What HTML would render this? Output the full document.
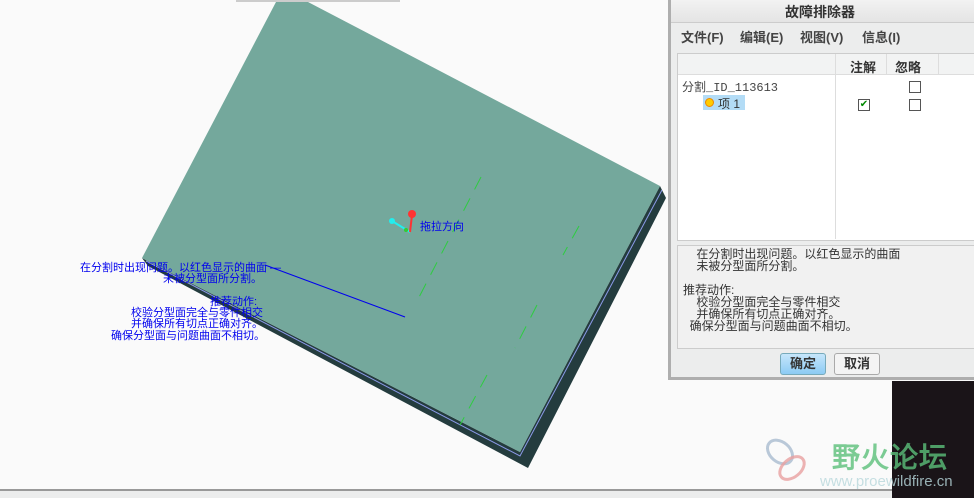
<!DOCTYPE html>
<html><head><meta charset="utf-8"><style>
body{margin:0;width:974px;height:498px;overflow:hidden;background:#fafafa;position:relative;font-family:"Liberation Sans","Noto Sans CJK SC",sans-serif;}
.abs{position:absolute}
.dlg{left:668px;top:0;width:306px;height:380px;background:#eceded;border-left:3px solid #aeaeae;border-bottom:3px solid #aeaeae;box-sizing:border-box}
.t{font-size:13px;color:#333}
.blue{color:#0000ee;font-size:11px;line-height:12px;white-space:nowrap;font-family:"Liberation Sans","WenQuanYi Zen Hei",sans-serif}
.cb{width:10px;height:10px;border:1px solid #555;background:#fff}
.btn{height:20px;border:1px solid #aaa;border-radius:3px;font-size:13px;font-weight:bold;text-align:center;line-height:20px;color:#333}
.m{position:absolute;top:27px;font-size:13px;font-weight:bold;color:#444}
</style></head><body>
<svg class="abs" style="left:0;top:0" width="974" height="498">
<rect x="236" y="0" width="164" height="2" fill="#ccc"/>
<polygon points="142,258 520,452 660,186 666,198 528,468 148,266" fill="#243c3e"/>
<polyline points="146,261 520,456 662,190" fill="none" stroke="#8b9ae8" stroke-width="1"/>
<polygon points="276,2 308,2 660,186 520,452 142,258" fill="#74a89c"/>
<g stroke="#2ecc40" stroke-width="1" stroke-dasharray="14 10">
<line x1="481" y1="177" x2="415" y2="305"/><line x1="579" y1="226" x2="563" y2="255"/>
<line x1="537" y1="305" x2="515" y2="348"/><line x1="487" y1="375" x2="460" y2="425"/>
</g>
<line x1="265" y1="265" x2="405" y2="317" stroke="#0000ee" stroke-width="1"/>
<line x1="410" y1="232" x2="392" y2="221" stroke="#2ee" stroke-width="2"/>
<line x1="410" y1="232" x2="412" y2="215" stroke="#f33" stroke-width="2"/>
<circle cx="392" cy="221" r="3" fill="#2ee"/><circle cx="412" cy="214" r="4" fill="#f33"/>
<circle cx="406" cy="230" r="2" fill="#3c3"/>
<rect x="0" y="489" width="974" height="2" fill="#999"/><rect x="0" y="491" width="974" height="7" fill="#eceded"/>
<rect x="892" y="381" width="82" height="117" fill="#1a1418"/>
</svg>
<div class="abs blue" style="left:420px;top:221px">拖拉方向</div>
<div class="abs blue" style="left:80px;top:262px">在分割时出现问题。以红色显示的曲面 —</div>
<div class="abs blue" style="left:163px;top:273px">未被分型面所分割。</div>
<div class="abs blue" style="left:210px;top:296px">推荐动作:</div>
<div class="abs blue" style="left:131px;top:307px">校验分型面完全与零件相交</div>
<div class="abs blue" style="left:131px;top:318px">并确保所有切点正确对齐。</div>
<div class="abs blue" style="left:111px;top:330px">确保分型面与问题曲面不相切。</div>
<div class="abs dlg">
 <div class="abs" style="left:0;top:0;width:303px;height:22px;background:linear-gradient(#f2f2f2,#e4e4e4);border-bottom:1px solid #ccc"></div>
 <div class="abs" style="left:114px;top:2px;font-size:14px;font-weight:bold;color:#333">故障排除器</div>
 <div class="m" style="left:10px">文件(F)</div>
 <div class="m" style="left:69px">编辑(E)</div>
 <div class="m" style="left:129px">视图(V)</div>
 <div class="m" style="left:191px">信息(I)</div>
 <div class="abs" style="left:6px;top:53px;width:300px;height:186px;background:#fff;border:1px solid #ccc"></div>
 <div class="abs" style="left:7px;top:54px;width:299px;height:20px;background:#f2f3f3;border-bottom:1px solid #ddd"></div>
 <div class="abs" style="left:164px;top:54px;width:1px;height:185px;background:#ddd"></div>
 <div class="abs" style="left:215px;top:54px;width:1px;height:20px;background:#ddd"></div>
 <div class="abs" style="left:267px;top:54px;width:1px;height:20px;background:#ddd"></div>
 <div class="abs t" style="left:179px;top:57px;font-weight:bold">注解</div>
 <div class="abs t" style="left:224px;top:57px;font-weight:bold">忽略</div>
 <div class="abs" style="left:11px;top:78px;font-size:12px;color:#444;font-family:'Liberation Mono','Noto Sans CJK SC',monospace">分割_ID_113613</div>
 <div class="abs" style="left:32px;top:95px;width:42px;height:15px;background:#b3dcf6"></div>
 <div class="abs" style="left:34px;top:98px;width:7px;height:7px;border-radius:50%;background:#fc0;border:1px solid #e80"></div>
 <div class="abs" style="left:47px;top:95px;font-size:12px;color:#333">项 1</div>
 <div class="abs cb" style="left:238px;top:81px"></div>
 <div class="abs cb" style="left:238px;top:99px"></div>
 <div class="abs cb" style="left:187px;top:99px;color:#080;font-size:10px;line-height:10px;text-align:center">✔</div>
 <div class="abs" style="left:6px;top:245px;width:300px;height:102px;border:1px solid #ccc;background:#f1f1f1"></div>
 <div class="abs t" style="left:12px;top:248px;line-height:12px;font-size:12px;white-space:pre">    在分割时出现问题。以红色显示的曲面
    未被分型面所分割。

推荐动作:
    校验分型面完全与零件相交
    并确保所有切点正确对齐。
  确保分型面与问题曲面不相切。</div>
 <div class="abs btn" style="left:109px;top:353px;width:44px;background:linear-gradient(#c6e6fb,#8ccbf4);border-color:#7ab">确定</div>
 <div class="abs btn" style="left:163px;top:353px;width:44px;background:#f4f4f4">取消</div>
</div>
<svg class="abs" style="left:760px;top:430px" width="60" height="60"><ellipse cx="20" cy="22" rx="14" ry="10" fill="none" stroke="#a9bcd0" stroke-width="3" transform="rotate(40 20 22)" opacity=".8"/><ellipse cx="32" cy="38" rx="14" ry="9" fill="none" stroke="#e9a0a0" stroke-width="3" transform="rotate(-40 32 38)" opacity=".8"/></svg>
<div class="abs" style="left:832px;top:436px;font-size:28px;font-weight:bold;color:#5cc07a;opacity:.8;letter-spacing:1px;font-family:'WenQuanYi Zen Hei',sans-serif">野火论坛</div>
<div class="abs" style="left:820px;top:473px;font-size:15px;color:#b8d8dc;opacity:.8">www.proewildfire.cn</div>
</body></html>
